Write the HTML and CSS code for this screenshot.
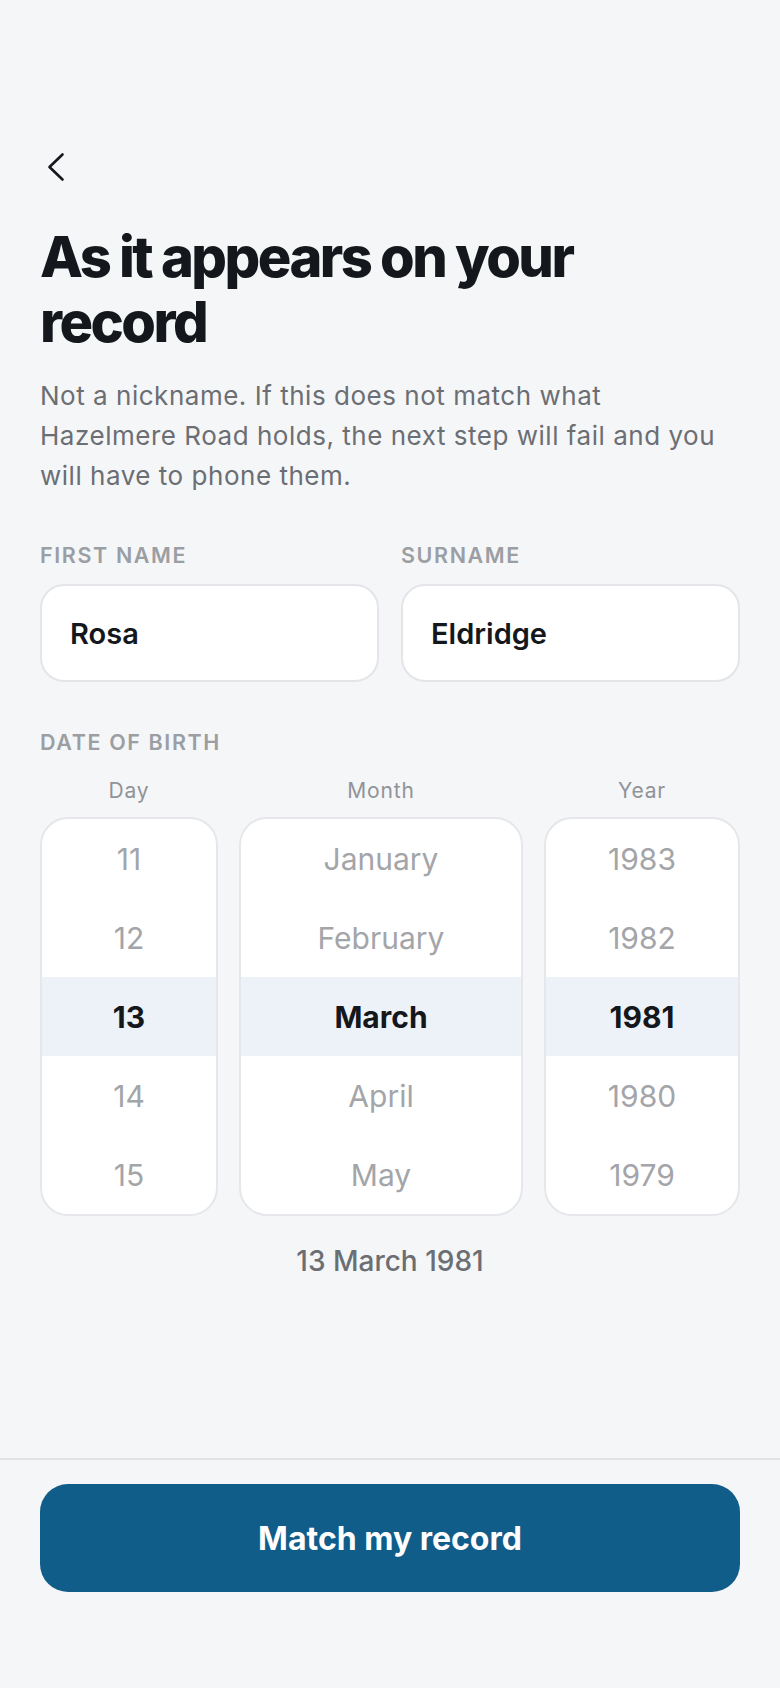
FILE: index.html
```html
<!DOCTYPE html>
<html lang="en">
<head>
<meta charset="utf-8">
<title>As it appears on your record</title>
<link rel="stylesheet" href="styles.css">
</head>
<body>
<div class="screen">
  <main class="content">
    <button class="back" aria-label="Back">
      <svg width="26" height="32" viewBox="0 0 26 32" fill="none">
        <path d="M22.5 3.5 L9.5 16 L22.5 28.5" stroke="#14171b" stroke-width="2.6" stroke-linecap="round" stroke-linejoin="round"/>
      </svg>
    </button>
    <h1 class="title">As it appears on your record</h1>
    <p class="lead">Not a nickname. If this does not match what<br>Hazelmere Road holds, the next step will fail and you<br>will have to phone them.</p>

    <div class="names">
      <div class="name-group">
        <div class="label">FIRST NAME</div>
        <div class="field">Rosa</div>
      </div>
      <div class="name-group">
        <div class="label">SURNAME</div>
        <div class="field">Eldridge</div>
      </div>
    </div>

    <div class="label dob-label">DATE OF BIRTH</div>
    <div class="pickers">
      <div class="picker-col">
        <div class="picker-title">Day</div>
        <div class="wheel">
          <div class="opt">11</div>
          <div class="opt">12</div>
          <div class="opt sel">13</div>
          <div class="opt">14</div>
          <div class="opt">15</div>
        </div>
      </div>
      <div class="picker-col">
        <div class="picker-title">Month</div>
        <div class="wheel">
          <div class="opt">January</div>
          <div class="opt">February</div>
          <div class="opt sel">March</div>
          <div class="opt">April</div>
          <div class="opt">May</div>
        </div>
      </div>
      <div class="picker-col">
        <div class="picker-title">Year</div>
        <div class="wheel">
          <div class="opt">1983</div>
          <div class="opt">1982</div>
          <div class="opt sel">1981</div>
          <div class="opt">1980</div>
          <div class="opt">1979</div>
        </div>
      </div>
    </div>
    <div class="summary">13 March 1981</div>
  </main>
  <footer class="footer">
    <button class="cta">Match my record</button>
  </footer>
</div>
</body>
</html>
```

FILE: styles.css
```css
* { box-sizing: border-box; }
html, body { margin: 0; padding: 0; }
body {
  background: #f5f6f8;
  font-family: Inter, "Noto Sans", sans-serif;
  color: #14171b;
}
.screen {
  min-height: 1688px;
  display: flex;
  flex-direction: column;
}
.content {
  padding: 151px 40px 0;
  flex: 1;
}
.back {
  display: block;
  border: 0;
  background: none;
  padding: 0;
  width: 26px;
  height: 32px;
  cursor: pointer;
}
.back svg { display: block; }
.title {
  margin: 42px 0 0;
  max-width: 620px;
  font-size: 56px;
  line-height: 64.5px;
  font-weight: 800;
  letter-spacing: -0.045em;
  color: #14171b;
}
.lead {
  margin: 22px 0 0;
  font-size: 26px;
  line-height: 40px;
  letter-spacing: 0.02em;
  color: #6b6e73;
  font-weight: 400;
}
.names {
  display: grid;
  grid-template-columns: 1fr 1fr;
  gap: 22px;
  margin-top: 46px;
}
.label {
  font-size: 21.5px;
  line-height: 26px;
  font-weight: 600;
  letter-spacing: 0.075em;
  color: #9b9ea3;
}
.field {
  margin-top: 16px;
  height: 98px;
  background: #fff;
  border: 2px solid #e3e5e8;
  border-radius: 24px;
  display: flex;
  align-items: center;
  padding: 0 28px;
  font-size: 29px;
  font-weight: 600;
  color: #14171b;
}
.dob-label { margin-top: 47px; }
.pickers {
  display: grid;
  grid-template-columns: 178fr 284fr 196fr;
  gap: 21px;
  margin-top: 24px;
}
.picker-title {
  text-align: center;
  font-size: 21px;
  line-height: 24px;
  letter-spacing: 0.04em;
  color: #909398;
  margin-bottom: 14px;
}
.wheel {
  background: #fff;
  border: 2px solid #e5e7ea;
  border-radius: 28px;
  overflow: hidden;
  display: flex;
  flex-direction: column;
}
.opt {
  height: 79px;
  display: flex;
  align-items: center;
  justify-content: center;
  font-size: 30px;
  color: #a3a5a9;
}
.opt.sel {
  background: #edf2f8;
  color: #14171b;
  font-weight: 700;
}
.summary {
  margin-top: 28px;
  text-align: center;
  font-size: 28px;
  line-height: 34px;
  font-weight: 500;
  color: #6b6e73;
}
.footer {
  border-top: 2px solid #e1e3e6;
  padding: 24px 40px 96px;
}
.cta {
  display: block;
  width: 100%;
  height: 108px;
  border: 0;
  border-radius: 28px;
  background: #115d89;
  color: #fff;
  font-family: Inter, "Noto Sans", sans-serif;
  font-size: 32px;
  font-weight: 700;
  letter-spacing: 0;
  cursor: pointer;
}
```
